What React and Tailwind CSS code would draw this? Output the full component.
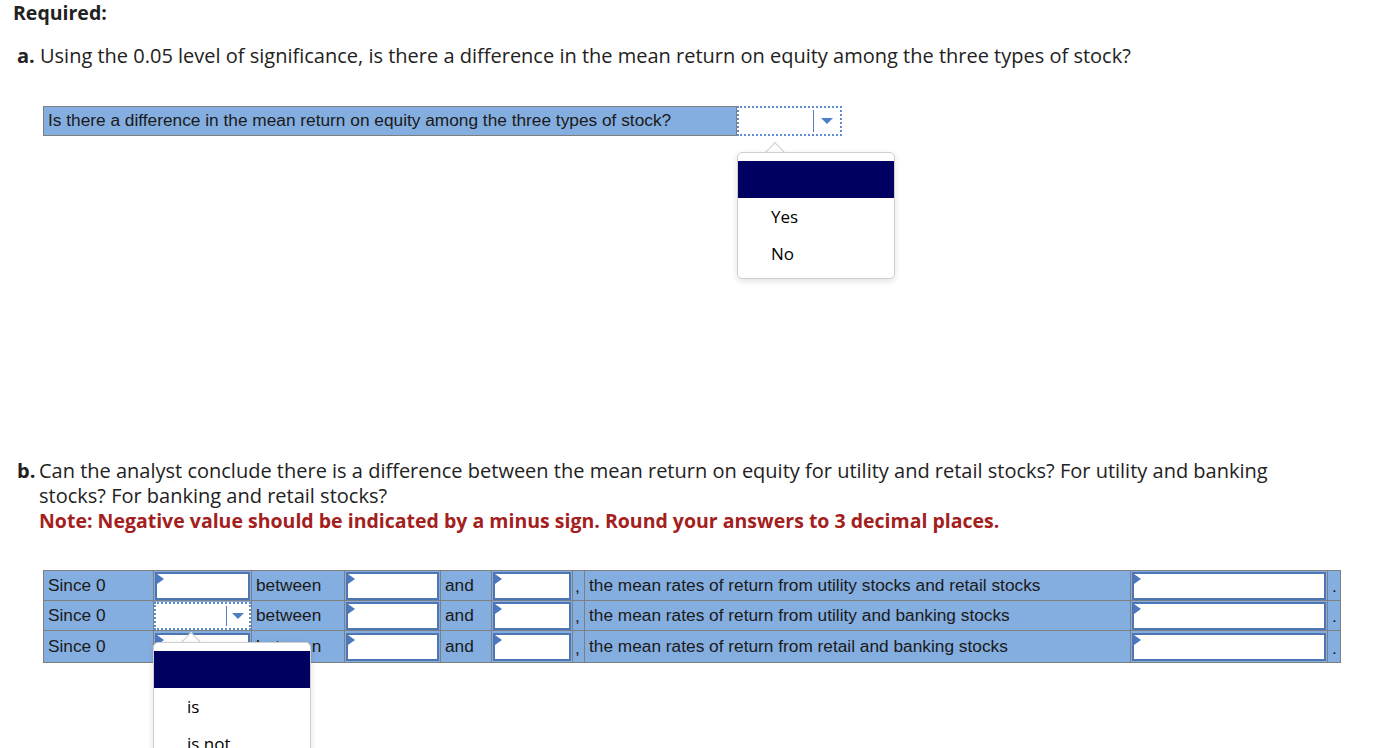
import React from "react";

const Flag = () => (
  <span className="absolute left-0 top-0 w-0 h-0 border-t-[5px] border-b-[5px] border-l-[7px] border-t-transparent border-b-transparent border-l-[#4b78c0]" />
);

function InputCell({ w }) {
  return (
    <td className={`${w} p-0 border border-[#7f7f7f] bg-[#85aee0]`}>
      <div className="relative h-[28px] mx-[1px] bg-white border-2 border-[#4e76b4]">
        <Flag />
      </div>
    </td>
  );
}

function SelectCell({ w }) {
  return (
    <td className={`${w} p-0 border border-[#7f7f7f] bg-[#85aee0]`}>
      <div className="relative h-[28px] bg-white border-2 border-dotted border-[#5f8ccc] flex items-center justify-end">
        <div className="h-[20px] border-l border-[#4e7ec4]" />
        <div className="w-[22px] flex justify-center">
          <span className="w-0 h-0 border-l-[6px] border-r-[6px] border-t-[6px] border-l-transparent border-r-transparent border-t-[#4e7ec4]" />
        </div>
      </div>
    </td>
  );
}

function TextCell({ w, children, cls = "" }) {
  return (
    <td className={`${w} p-0 px-1 border border-[#7f7f7f] bg-[#85aee0] text-[17.3px] text-[#1a1a1a] whitespace-nowrap ${cls}`}>
      {children}
    </td>
  );
}

function Popup({ className, items }) {
  return (
    <div className={`absolute ${className}`}>
      <div className="absolute left-[31px] -top-[7px] w-[14px] h-[14px] rotate-45 bg-white border-l border-t border-[#cfcfcf]" />
      <div className="relative w-[158px] bg-white border border-[#cfcfcf] rounded-[5px] shadow-[0_2px_6px_rgba(0,0,0,0.12)] pt-[8px] pb-[6px] font-['Open_Sans',sans-serif]">
        <div className="h-[37px] bg-[#000060]" />
        {items.map((t) => (
          <div key={t} className="h-[37px] flex items-center pl-[33px] text-[17px] text-black">
            {t}
          </div>
        ))}
      </div>
    </div>
  );
}

const rows = [
  "the mean rates of return from utility stocks and retail stocks",
  "the mean rates of return from utility and banking stocks",
  "the mean rates of return from retail and banking stocks",
];

export default function App() {
  return (
    <div className="relative w-[1390px] h-[748px] overflow-hidden bg-white text-[#222] font-['Open_Sans',sans-serif]">
      <div className="pl-[13px] pt-[1px] text-[19.5px] font-bold leading-[24px]">Required:</div>

      <div className="pl-[17px] mt-[18px] text-[20px] leading-[26px]">
        <span className="font-bold">a.</span> Using the 0.05 level of significance, is there a difference in the mean return on equity among the three types of stock?
      </div>

      <div className="ml-[43px] mt-[37px] flex h-[30px] font-['Liberation_Sans',Arial,sans-serif]">
        <div className="w-[694px] bg-[#85aee0] border border-[#7f7f7f] text-[17.3px] text-[#1a1a1a] pl-[4px] flex items-center">
          Is there a difference in the mean return on equity among the three types of stock?
        </div>
        <div className="w-[105px] bg-white border-2 border-dotted border-[#5f8ccc] flex items-center justify-end">
          <div className="h-[22px] border-l border-[#4e7ec4]" />
          <div className="w-[26px] flex justify-center">
            <span className="w-0 h-0 border-l-[6px] border-r-[6px] border-t-[6px] border-l-transparent border-r-transparent border-t-[#4e7ec4]" />
          </div>
        </div>
      </div>

      <div className="mt-[322px] pl-[17px] text-[20px] leading-[25px]">
        <div className="flex">
          <span className="font-bold w-[22px] shrink-0">b.</span>
          <div className="w-[1235px]">
            Can the analyst conclude there is a difference between the mean return on equity for utility and retail stocks? For utility and banking stocks? For banking and retail stocks?
            <div className="text-[#a3201d] font-bold text-[19.5px]">
              Note: Negative value should be indicated by a minus sign. Round your answers to 3 decimal places.
            </div>
          </div>
        </div>
      </div>

      <table className="ml-[43px] mt-[37px] border-collapse font-['Liberation_Sans',Arial,sans-serif] table-fixed w-[1297px]">
        <tbody>
          {rows.map((r, i) => (
            <tr key={i} className={i === 2 ? "h-[32px]" : "h-[30px]"}>
              <TextCell w="w-[110px]">Since 0</TextCell>
              {i === 1 ? <SelectCell w="w-[98px]" /> : <InputCell w="w-[98px]" />}
              <TextCell w="w-[93px]">between</TextCell>
              <InputCell w="w-[96px]" />
              <TextCell w="w-[51px]">and</TextCell>
              <InputCell w="w-[81px]" />
              <TextCell w="w-[12px]" cls="!px-[2px] align-bottom">,</TextCell>
              <TextCell w="w-[546px]">{r}</TextCell>
              <InputCell w="w-[197px]" />
              <TextCell w="w-[13px]" cls="!px-[4px] align-bottom">.</TextCell>
            </tr>
          ))}
        </tbody>
      </table>

      <Popup className="left-[737px] top-[152px]" items={["Yes", "No"]} />
      <Popup className="left-[153px] top-[642px]" items={["is", "is not"]} />
    </div>
  );
}
